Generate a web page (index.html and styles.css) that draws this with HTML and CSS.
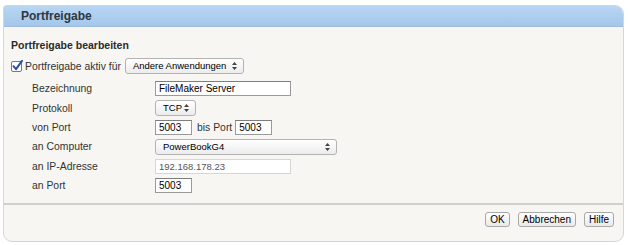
FILE: index.html
```html
<!DOCTYPE html>
<html lang="de">
<head>
    <meta charset="UTF-8">
    <meta name="viewport" content="width=device-width, initial-scale=1.0">
    <title>Portfreigabe</title>
    <link rel="stylesheet" href="styles.css">
</head>
<body>
    <div class="panel">
        <div class="panel-head">Portfreigabe</div>
        <div class="panel-body">
            <h2>Portfreigabe bearbeiten</h2>
            <div class="active-row">
                <span class="check">
                    <svg width="12" height="12" viewBox="0 0 12 12">
                        <rect x="0.5" y="1.5" width="10" height="10" rx="1.5" fill="#fff" stroke="#7a7a7a"/>
                        <path d="M2.5 6.2 L5 9.2 L11 0.8" fill="none" stroke="#2c4fa8" stroke-width="2" stroke-linecap="round" stroke-linejoin="round"/>
                    </svg>
                </span>
                <span>Portfreigabe aktiv für</span>
                <span class="select wide">Andere Anwendungen
                    <svg class="arrows" width="5" height="8" viewBox="0 0 5 8"><path d="M2.5 0 L5 3 L0 3 Z M0 5 L5 5 L2.5 8 Z" fill="#444"/></svg>
                </span>
            </div>
            <div class="form">
                <label>Bezeichnung</label>
                <div><span class="field long">FileMaker Server</span></div>

                <label>Protokoll</label>
                <div><span class="select small">TCP
                    <svg class="arrows" width="5" height="8" viewBox="0 0 5 8"><path d="M2.5 0 L5 3 L0 3 Z M0 5 L5 5 L2.5 8 Z" fill="#444"/></svg>
                </span></div>

                <label>von Port</label>
                <div class="inline"><span class="field port">5003</span><span class="bis">bis Port</span><span class="field port">5003</span></div>

                <label>an Computer</label>
                <div><span class="select computer">PowerBookG4
                    <svg class="arrows" width="5" height="8" viewBox="0 0 5 8"><path d="M2.5 0 L5 3 L0 3 Z M0 5 L5 5 L2.5 8 Z" fill="#444"/></svg>
                </span></div>

                <label>an IP-Adresse</label>
                <div><span class="field long disabled">192.168.178.23</span></div>

                <label>an Port</label>
                <div><span class="field port">5003</span></div>
            </div>
        </div>
        <div class="panel-foot">
            <button class="btn">OK</button>
            <button class="btn">Abbrechen</button>
            <button class="btn">Hilfe</button>
        </div>
    </div>
</body>
</html>
```

FILE: styles.css
```css
body {
    margin: 0;
    padding: 5px 6px 0 3px;
    background-color: #fff;
    font-family: "Liberation Sans", Arial, sans-serif;
    font-size: 10.4px;
    color: #333;
}
.panel {
    height: 237px;
    background-color: #f7f6f2;
    border: 1px solid #d6d6d2;
    border-radius: 3px 9px 9px 9px;
    box-sizing: border-box;
    display: flex;
    flex-direction: column;
    overflow: hidden;
}
.panel-head {
    height: 20px;
    line-height: 20px;
    padding-left: 17px;
    background: linear-gradient(#b7d6f2, #a4c7ea);
    border-bottom: 1px solid #9dbde0;
    font-weight: bold;
    font-size: 12px;
    color: #2e3640;
}
.panel-body {
    flex: 1;
    padding: 0 7px;
}
h2 {
    font-size: 10.5px;
    margin: 12px 0 7px;
    color: #2b2b2b;
}
.active-row {
    display: flex;
    align-items: center;
    height: 16px;
    white-space: nowrap;
}
.check {
    display: flex;
    margin-right: 2px;
}
.form {
    display: grid;
    grid-template-columns: 123px auto;
    grid-auto-rows: 19.4px;
    align-items: center;
    margin: 5px 0 0 21px;
}
.inline {
    display: flex;
    align-items: center;
}
.bis {
    margin: 0 3px 0 5px;
}
.field, .select {
    display: inline-block;
    box-sizing: border-box;
    font-family: "Liberation Sans", Arial, sans-serif;
    color: #000;
    vertical-align: middle;
    white-space: nowrap;
}
.field {
    height: 15px;
    line-height: 13px;
    padding: 0 3px;
    font-size: 10px;
    background-color: #fff;
    border: 1px solid #9a9a9a;
    border-top-color: #7d7d7d;
}
.field.long {
    width: 136px;
}
.field.port {
    width: 37px;
}
.field.disabled {
    border-color: #d6d6d2;
    color: #555;
    font-size: 9.5px;
}
.select {
    height: 16px;
    line-height: 14px;
    padding: 0 6px 0 7px;
    font-size: 9.5px;
    background: linear-gradient(#ffffff, #ececec);
    border: 1px solid #b3b3b3;
    border-radius: 3px;
    position: relative;
}
.select.wide {
    width: 119px;
    margin-left: 4px;
}
.select.small {
    width: 41px;
}
.select.computer {
    width: 182px;
}
.arrows {
    position: absolute;
    right: 6px;
    top: 3px;
}
.panel-foot {
    height: 38px;
    box-sizing: border-box;
    border-top: 2px solid #cfcfcb;
    display: flex;
    justify-content: flex-end;
    align-items: flex-start;
    padding: 7px 9px 0 0;
    gap: 8px;
}
.btn {
    height: 15px;
    padding: 0 4px;
    font-family: "Liberation Sans", Arial, sans-serif;
    font-size: 10px;
    color: #000;
    background: linear-gradient(#ffffff, #e9e9e9);
    border: 1px solid #a9a9a9;
    border-radius: 3px;
    line-height: 13px;
}
```
